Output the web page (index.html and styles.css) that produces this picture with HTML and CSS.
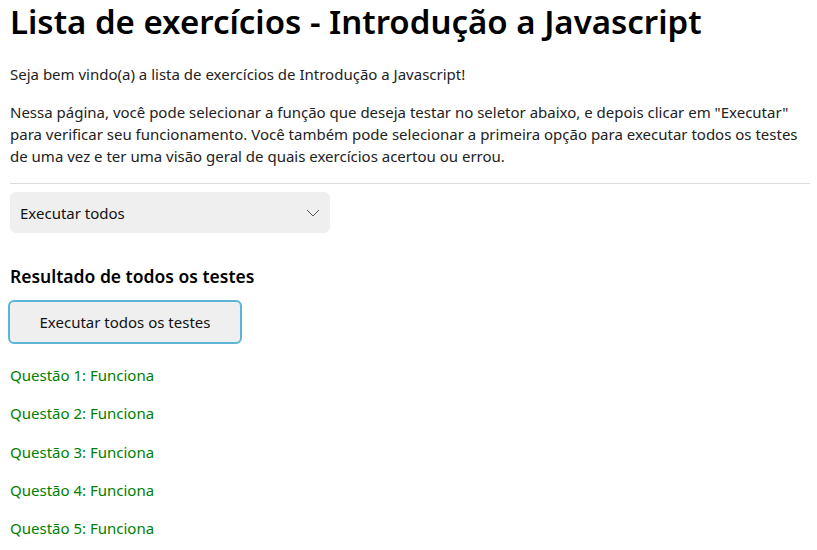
FILE: index.html
```html
<!DOCTYPE html>
<html lang="pt-BR">
<head>
<meta charset="utf-8">
<title>Lista de exercícios</title>
<link rel="stylesheet" href="styles.css">
</head>
<body>
<main class="page">
  <h1 class="title">Lista de exercícios - Introdução a Javascript</h1>
  <p class="intro">Seja bem vindo(a) a lista de exercícios de Introdução a Javascript!</p>
  <p class="intro intro-long">Nessa página, você pode selecionar a função que deseja testar no seletor abaixo, e depois clicar em "Executar" para verificar seu funcionamento. Você também pode selecionar a primeira opção para executar todos os testes de uma vez e ter uma visão geral de quais exercícios acertou ou errou.</p>
  <hr class="divider">
  <div class="select">
    <span>Executar todos</span>
    <svg class="chevron" width="14" height="8" viewBox="0 0 14 8"><path d="M1 1l6 6 6-6" fill="none" stroke="#555" stroke-width="1"/></svg>
  </div>
  <h3 class="subtitle">Resultado de todos os testes</h3>
  <button class="run">Executar todos os testes</button>
  <ul class="results">
    <li>Questão 1: Funciona</li>
    <li>Questão 2: Funciona</li>
    <li>Questão 3: Funciona</li>
    <li>Questão 4: Funciona</li>
    <li>Questão 5: Funciona</li>
  </ul>
</main>
</body>
</html>
```
FILE: styles.css
```css
* { box-sizing: border-box; }
body {
  margin: 0;
  font-family: "Noto Sans", "Open Sans", sans-serif;
  font-size: 15px;
  color: #222;
  background: #fff;
}
.page {
  width: 820px;
  padding: 0 10px;
}
.title {
  margin: 0;
  padding-top: 1px;
  font-size: 33px;
  font-weight: 600;
  color: #000;
  line-height: 42px;
}
.intro {
  margin: 20px 0 0;
  line-height: 22px;
}
.intro-long {
  margin-top: 16px;
}
.divider {
  margin: 16px 0 8px;
  border: 0;
  border-top: 1px solid #ddd;
}
.select {
  width: 320px;
  height: 41px;
  background: #efefef;
  border-radius: 6px;
  display: flex;
  align-items: center;
  justify-content: space-between;
  padding: 0 10px;
  font-size: 15px;
  color: #111;
}
.subtitle {
  margin: 31px 0 12px;
  font-size: 17.5px;
  font-weight: 600;
  color: #000;
}
.run {
  margin-left: -2px;
  width: 234px;
  height: 44px;
  background: #efefef;
  border: 2px solid #5ab6d4;
  border-radius: 6px;
  font-family: inherit;
  font-size: 15px;
  color: #111;
}
.results {
  list-style: none;
  margin: 20px 0 0;
  padding: 0;
  color: #008000;
}
.results li {
  line-height: 22px;
  margin-bottom: 16.3px;
}
```
